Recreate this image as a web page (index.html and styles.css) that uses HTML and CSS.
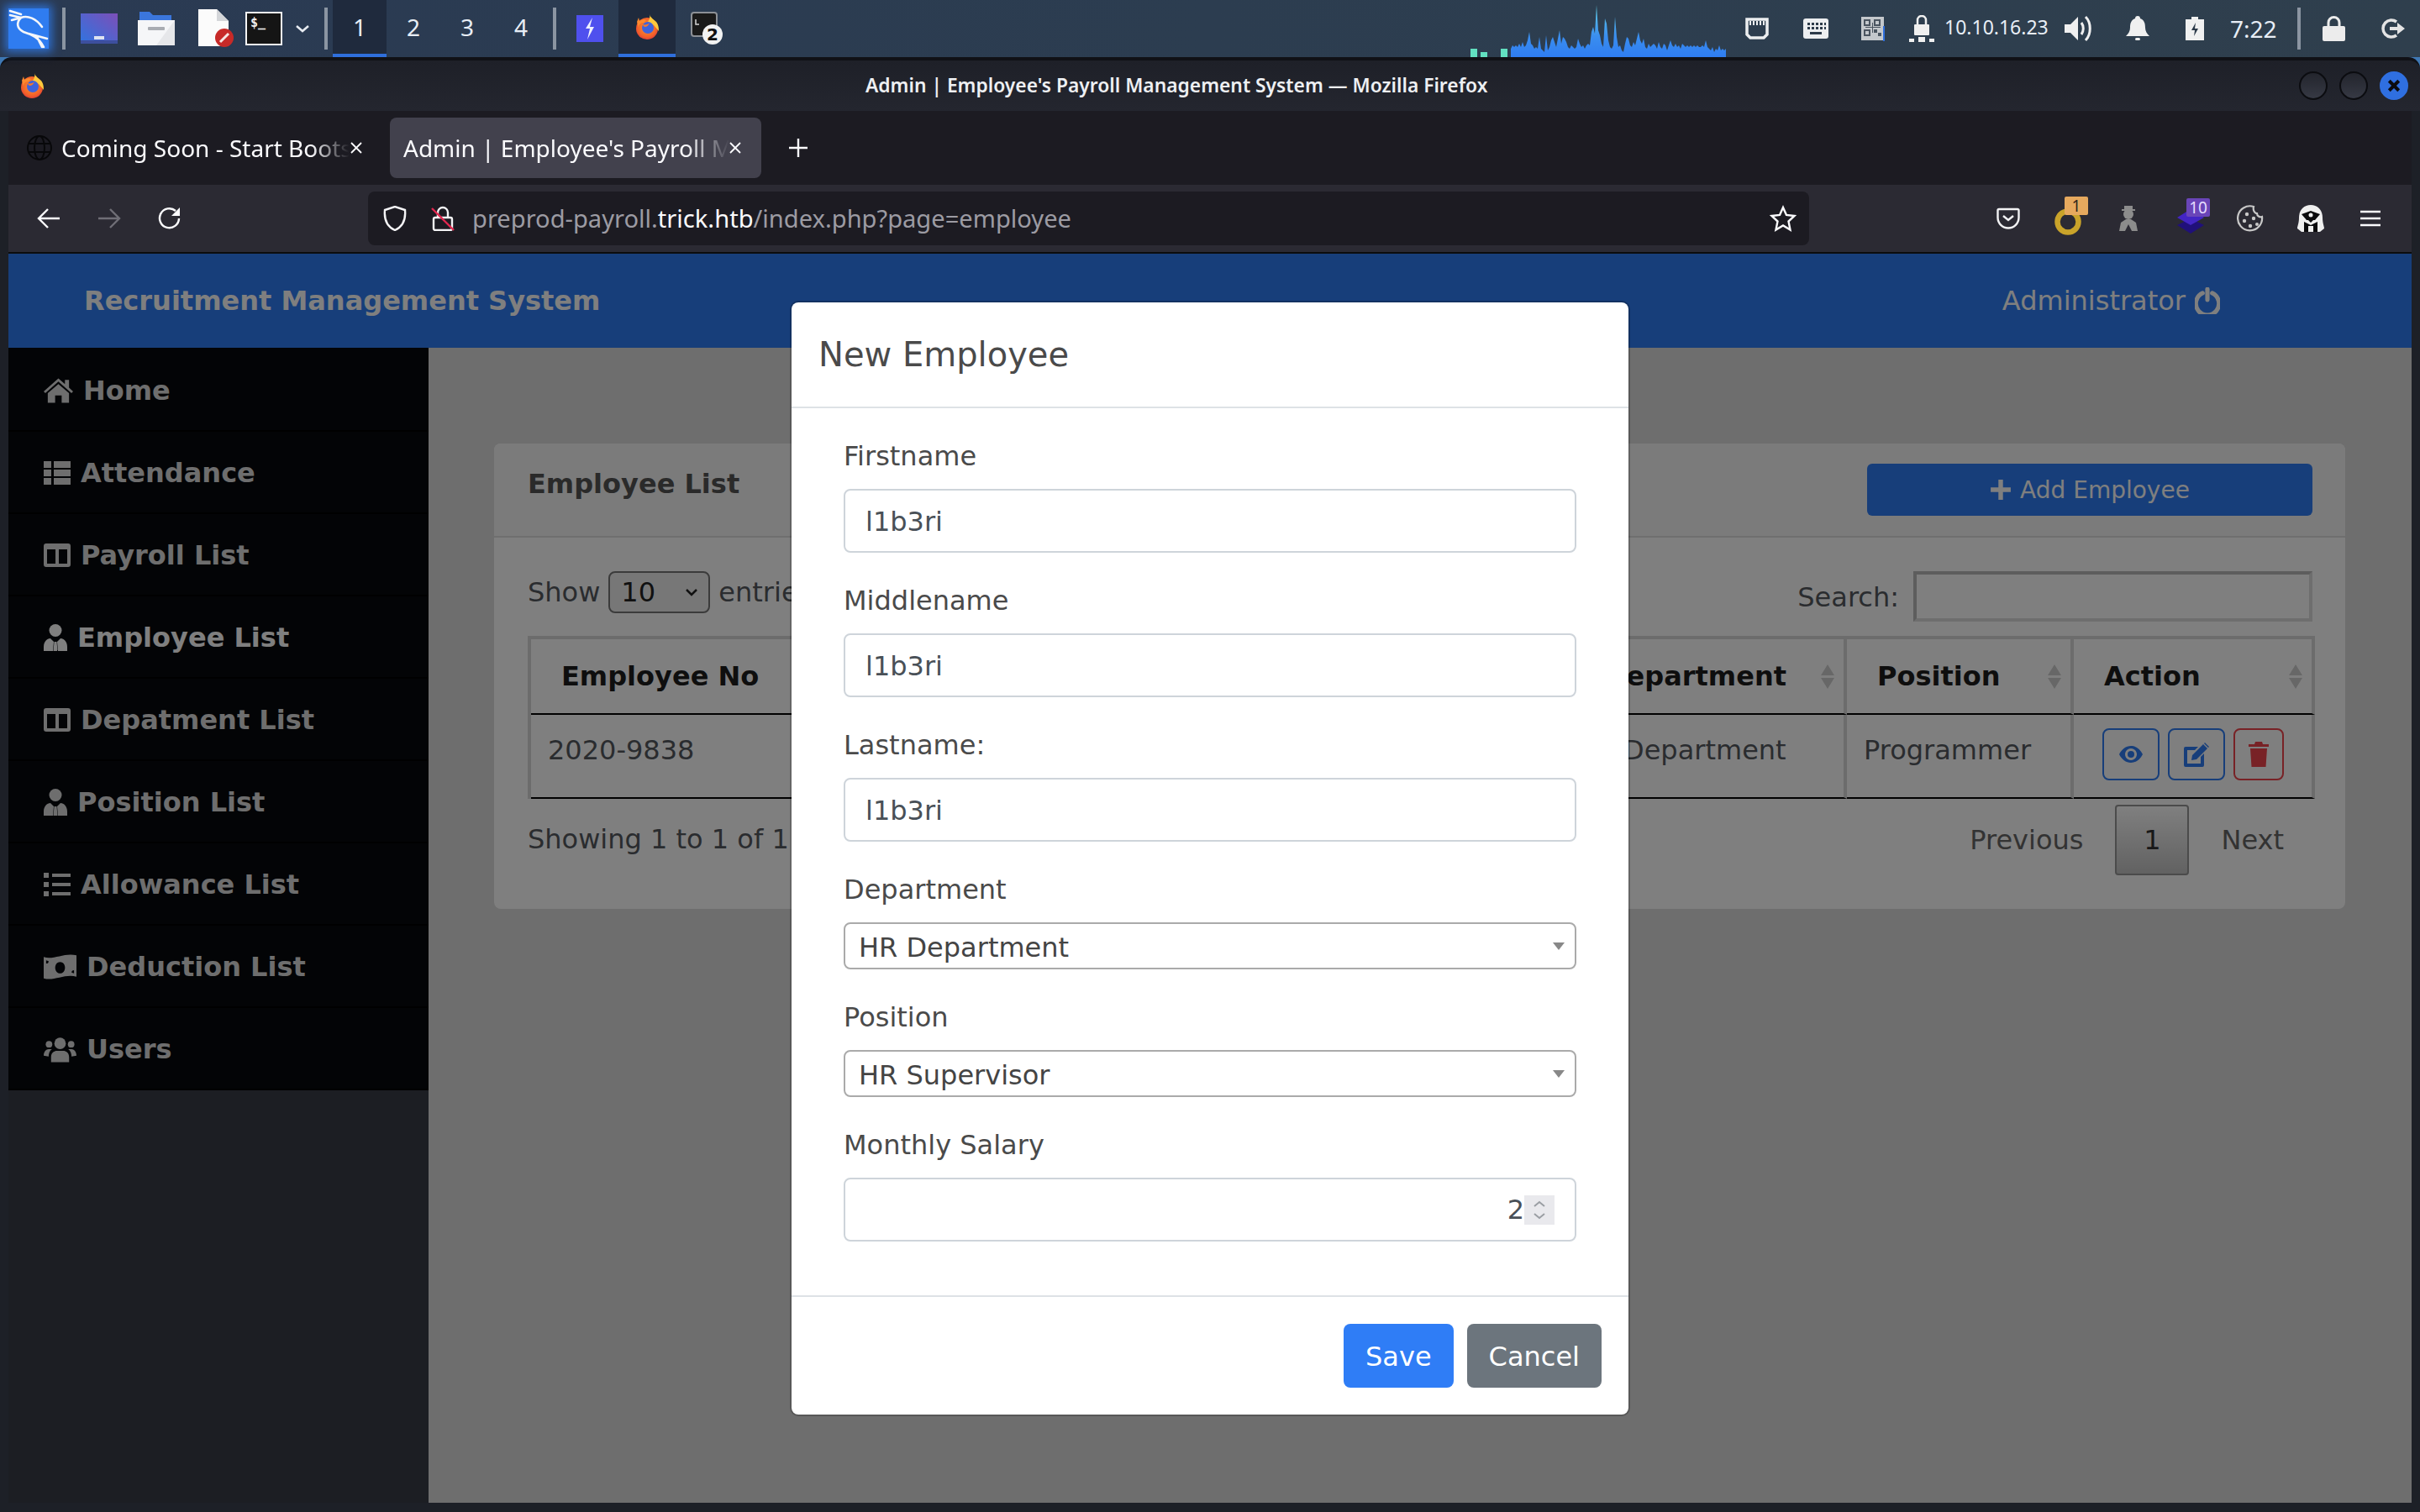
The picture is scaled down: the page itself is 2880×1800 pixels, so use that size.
FILE: index.html
```html
<!DOCTYPE html>
<html lang="en">
<head>
<meta charset="utf-8">
<title>Admin | Employee's Payroll Management System</title>
<link rel="stylesheet" href="styles.css">
</head>
<body>
<svg class="defs" width="0" height="0" aria-hidden="true">
  <defs>
    <linearGradient id="gAppGrid" x1="0" y1="1" x2="1" y2="0"><stop offset="0" stop-color="#2f74e0"/><stop offset="1" stop-color="#7c4fb8"/></linearGradient>
    <linearGradient id="gGraph" x1="0" y1="0" x2="0" y2="1"><stop offset="0" stop-color="#62d0e6"/><stop offset=".6" stop-color="#3a8ef0"/><stop offset="1" stop-color="#2f7df0"/></linearGradient>
    <radialGradient id="gFox" cx=".5" cy=".45" r=".62"><stop offset="0" stop-color="#ff9a2e"/><stop offset=".7" stop-color="#f2602a"/><stop offset="1" stop-color="#d8303c"/></radialGradient>
    <symbol id="fox" viewBox="0 0 28 30">
      <circle cx="14" cy="17" r="13" fill="url(#gFox)"/>
      <path d="M17 0c1 4 5 6 8 9 3 4 3 8 3 11l-6-7-7-4c2-3 3-6 2-9z" fill="#ffc93c"/>
      <path d="M2 9l2-5 1 4c3-2 6-2 8-1l-3 3c-3 0-6 2-6 6z" fill="#ff8a2e"/>
      <circle cx="15" cy="16" r="7" fill="#3f63dc"/>
      <path d="M8 12c4 1 8 0 9-2-1 3-3 5-6 5z" fill="#f7782b"/>
    </symbol>
    <symbol id="fa-user" viewBox="0 0 28 32">
      <circle cx="14" cy="7.500" r="7.500"/>
      <path d="M0 32v-5c0-6 4-10 8-10l3 3 1 1-1 11zM28 32v-5c0-6-4-10-8-10l-3 3-1 1 1 11zM12.500 21h3l1 11h-5z"/>
    </symbol>
    <symbol id="fa-columns" viewBox="0 0 32 32">
      <path fill-rule="evenodd" d="M3 2h26a3 3 0 0 1 3 3v22a3 3 0 0 1-3 3H3a3 3 0 0 1-3-3V5a3 3 0 0 1 3-3zM4 9v17h10V9zM18 9v17h10V9z"/>
    </symbol>
  </defs>
</svg>

<header class="taskbar">
  <svg class="kali" width="48" height="48" viewBox="0 0 48 48"><rect width="48" height="48" fill="#2f7cf0"/><path d="M2 3l13 4M2 8l13 3M4 14l11-3c8-3 18 1 25 11M15 11c-6 6-5 13 3 17 9 3 18 6 24 18M24 30l22 6M34 34l6 12" fill="none" stroke="#f4f6fa" stroke-width="2.600" stroke-linecap="round"/></svg>
  <span class="tb-sep"></span>
  <svg class="t-apps" width="44" height="36" viewBox="0 0 44 36"><rect width="44" height="36" fill="url(#gAppGrid)"/><rect y="32" width="44" height="4" fill="#3d4f9e"/><rect x="16" y="27" width="12" height="4" fill="#dfe3f0"/></svg>
  <svg class="t-files" width="44" height="40" viewBox="0 0 44 40"><path d="M2 0h12l4 4h22v8H2z" fill="#3b76dc"/><rect y="10" width="44" height="30" fill="#f5f6f8"/><path d="M44 10v30H22z" fill="#e6e7ea"/><rect x="12" y="18" width="20" height="4" rx="1" fill="#a9acb2"/></svg>
  <svg class="t-doc" width="42" height="46" viewBox="0 0 42 46"><path d="M0 0h22l14 14v30H0z" fill="#fbfbfb"/><path d="M22 0l14 14H22z" fill="#d4d6d9"/><circle cx="31" cy="34" r="11" fill="#c72a28"/><path d="M26 39l10-10" stroke="#f7e6e3" stroke-width="3"/></svg>
  <svg class="t-term" width="44" height="40" viewBox="0 0 44 40"><rect x="1" y="1" width="42" height="38" fill="#151515" stroke="#f5f5f5" stroke-width="2"/><text class="term-glyph" x="6" y="18">$_</text></svg>
  <svg class="t-chev" width="16" height="10" viewBox="0 0 16 10"><path d="M1 2l7 6 7-6" fill="none" stroke="#e8ecf2" stroke-width="2.500"/></svg>
  <span class="tb-sep tb-sep-b"></span>
  <span class="ws ws-first ws-active">1</span>
  <span class="ws">2</span>
  <span class="ws">3</span>
  <span class="ws">4</span>
  <span class="tb-sep tb-sep-c"></span>
  <svg class="t-bolt" width="32" height="32" viewBox="0 0 32 32"><rect width="32" height="32" fill="#4f50ee"/><path d="M19 3l-8 13h5l-3 13 8-15h-5z" fill="#eef0ff"/></svg>
  <span class="ws-app"><svg width="28" height="30"><use href="#fox"/></svg></span>
  <svg class="t-term2" width="40" height="40" viewBox="0 0 40 40"><rect x="1" y="1" width="30" height="28" rx="3" fill="#1a1a1a" stroke="#8c9096" stroke-width="2"/><path d="M6 9v6h4" stroke="#d8d8d8" stroke-width="1.500" fill="none"/><circle cx="26" cy="27" r="12" fill="#f2f2f2"/><text class="badge-glyph" x="26" y="34">2</text></svg>
  <div class="tray">
    <svg class="netgraph" width="304" height="64" viewBox="0 0 304 64">
      <path d="M0 64v-10h8v10zM12 64v-6h8v6zM36 64v-10h8v10z" fill="#62e0c0"/>
      <polygon fill="url(#gGraph)" points="48,64 48,54 50,50 52,52 54,50 56,52 58,48 60,52 62,46 64,52 66,50 68,44 70,34 72,48 74,50 76,54 78,52 80,54 82,40 84,54 86,56 88,58 90,38 92,56 94,52 96,44 98,40 100,46 102,52 104,42 106,32 108,48 110,40 112,42 114,46 116,52 118,54 120,50 122,52 124,54 126,52 128,42 130,48 132,52 134,50 136,54 138,50 140,48 142,50 144,34 146,28 148,36 150,2 152,32 154,38 156,48 158,52 160,18 162,24 164,44 166,52 168,54 170,50 172,16 174,40 176,52 178,50 180,56 182,58 184,48 186,40 188,42 190,50 192,52 194,46 196,50 198,42 200,34 202,44 204,48 206,42 208,52 210,54 212,48 214,52 216,50 218,48 220,50 222,54 224,46 226,52 228,54 230,48 232,50 234,56 236,50 238,44 240,50 242,52 244,48 246,52 248,50 250,54 252,48 254,50 256,52 258,50 260,52 262,50 264,52 266,50 268,52 270,50 272,52 274,52 276,50 278,52 280,44 282,52 284,54 286,56 288,52 290,58 292,54 294,56 296,50 298,56 300,54 302,56 304,54 304,64"/>
    </svg>
    <svg class="t-eth" width="28" height="26" viewBox="0 0 28 26"><path d="M2 2h24v18l-4 4H6l-4-4z" fill="none" stroke="#eceef0" stroke-width="3.500"/><path d="M6 4v5M10 4v5M14 4v5M18 4v5M22 4v5" stroke="#eceef0" stroke-width="2"/></svg>
    <svg class="t-kb" width="30" height="24" viewBox="0 0 30 24"><rect width="30" height="24" rx="3" fill="#eceef0"/><path d="M5 5h3v3H5zM10 5h3v3h-3zM15 5h3v3h-3zM20 5h3v3h-3zM25 5h2v3h-2zM5 10h3v3H5zM10 10h3v3h-3zM15 10h3v3h-3zM20 10h3v3h-3zM25 10h2v3h-2zM8 16h14v3H8z" fill="#2c3a49"/></svg>
    <svg class="t-qr" width="30" height="30" viewBox="0 0 30 30"><rect y="1" width="27" height="28" fill="#c4c8cc"/><path d="M3 4h8v2H3zM3 6h2v4H3zM9 6h2v4H9zM3 10h8v2H3zM15 4h8v8h-8zM3 16h8v8H3zM15 16h4v4h-4zM20 20h4v4h-4zM13 8h1v12h-1zM5 13h18v1H5z" fill="#4b5560"/><path d="M17 6h4v4h-4zM5 18h4v4H5z" fill="#c4c8cc"/><rect x="26" y="12" width="2" height="18" fill="#2f6fdc"/></svg>
    <svg class="t-locknet" width="30" height="32" viewBox="0 0 30 32"><path d="M10 12V6a5 5 0 0 1 10 0v6" fill="none" stroke="#f0f0f0" stroke-width="2.500"/><rect x="6" y="11" width="18" height="13" rx="1" fill="#f0f0f0"/><path d="M0 28h6v4H0zM11 26h8v6h-8zM24 28h6v4h-6z" fill="#f0f0f0"/></svg>
    <span class="ip">10.10.16.23</span>
    <svg class="t-vol" width="35" height="32" viewBox="0 0 35 32"><path d="M0 11h7l9-9v28l-9-9H0z" fill="#f0f0f0"/><path d="M20 9c3 4 3 10 0 14M25 2c7 7 7 21 0 28" fill="none" stroke="#f0f0f0" stroke-width="3"/></svg>
    <svg class="t-bell" width="28" height="30" viewBox="0 0 28 30"><path d="M14 0c2 0 3 1 3 3 5 2 6 6 6 11 0 4 2 7 5 10H0c3-3 5-6 5-10 0-5 1-9 6-11 0-2 1-3 3-3z" fill="#f0f0f0"/><rect x="11" y="26" width="6" height="3" rx="1.500" fill="#f0f0f0"/></svg>
    <svg class="t-batt" width="22" height="28" viewBox="0 0 22 28"><path d="M7 0h8v3h7v25H0V3h7z" fill="#f0f0f0"/><path d="M12 7l-5 9h4l-1 7 5-9h-4z" fill="#2c3a49"/></svg>
    <span class="clock">7:22</span>
    <span class="tb-sep tb-sep-d"></span>
    <svg class="t-lock" width="27" height="30" viewBox="0 0 27 30"><path d="M7 13V8a6.500 6.500 0 0 1 13 0v5" fill="none" stroke="#ececec" stroke-width="3"/><rect y="12" width="27" height="18" rx="2" fill="#ececec"/></svg>
    <svg class="t-out" width="29" height="26" viewBox="0 0 29 26"><path d="M18 5a10 10 0 1 0 0 16" fill="none" stroke="#e4e4e4" stroke-width="3.500"/><path d="M10 11h9V6l9 7-9 7v-5h-9z" fill="#e4e4e4"/></svg>
  </div>
</header>

<div class="window">
  <div class="titlebar">
    <svg class="title-fox" width="28" height="30"><use href="#fox"/></svg>
    <span class="title-text">Admin | Employee's Payroll Management System — Mozilla Firefox</span>
    <div class="winbtns">
      <span class="winbtn"></span>
      <span class="winbtn"></span>
      <span class="winbtn winbtn-close"><svg width="16" height="16" viewBox="0 0 14 14"><path d="M2 2l10 10M12 2L2 12" stroke="#0b0c10" stroke-width="3.500"/></svg></span>
    </div>
  </div>

  <div class="tabbar">
    <div class="tab">
      <svg class="globe" width="30" height="30" viewBox="0 0 30 30"><g fill="none" stroke="#08080a" stroke-width="2"><circle cx="15" cy="15" r="14"/><ellipse cx="15" cy="15" rx="6" ry="14"/><path d="M1 10h28M1 20h28"/></g></svg>
      <span class="tab-label tab-label-a">Coming Soon - Start Boots</span>
      <svg class="tab-x" width="16" height="16" viewBox="0 0 16 16"><path d="M2 2l12 12M14 2L2 14" stroke="#fbfbfe" stroke-width="1.800"/></svg>
    </div>
    <div class="tab tab-active">
      <span class="tab-label tab-label-b">Admin | Employee's Payroll M</span>
      <svg class="tab-x" width="16" height="16" viewBox="0 0 16 16"><path d="M2 2l12 12M14 2L2 14" stroke="#fbfbfe" stroke-width="1.800"/></svg>
    </div>
    <svg class="tab-plus" width="24" height="24" viewBox="0 0 24 24"><path d="M12 1v22M1 12h22" stroke="#fbfbfe" stroke-width="2.400"/></svg>
  </div>

  <div class="toolbar">
    <svg class="nav-back" width="28" height="26" viewBox="0 0 28 26"><path d="M27 13H3M13 2L2 13l11 11" fill="none" stroke="#fbfbfe" stroke-width="2.400"/></svg>
    <svg class="nav-fwd" width="30" height="26" viewBox="0 0 28 26"><path d="M1 13h24M15 2l11 11-11 11" fill="none" stroke="#6f6e76" stroke-width="2.400"/></svg>
    <svg class="nav-reload" width="28" height="28" viewBox="0 0 28 28"><path d="M25 14a11.500 11.500 0 1 1-4-9" fill="none" stroke="#fbfbfe" stroke-width="2.400"/><path d="M26 1v10H16z" fill="#fbfbfe"/></svg>
    <div class="urlbar">
      <svg width="28" height="30" viewBox="0 0 28 30"><path d="M14 1l12 4c1 11-3 20-12 24C5 25 1 16 2 5z" fill="none" stroke="#f4f4f6" stroke-width="2.400"/></svg>
      <svg class="url-lock" width="28" height="30" viewBox="0 0 28 30"><path d="M8 14V8a6 6 0 0 1 12 0v6" fill="none" stroke="#f4f4f6" stroke-width="2.400"/><rect x="3" y="14" width="22" height="15" rx="2" fill="none" stroke="#f4f4f6" stroke-width="2.400"/><path d="M1 3l26 26" stroke="#e22850" stroke-width="2.400"/></svg>
      <span class="url"><span class="url-dim">preprod-payroll.</span>trick.htb<span class="url-dim">/index.php?page=employee</span></span>
      <svg class="url-star" width="32" height="32" viewBox="0 0 32 32"><path d="M16 3l4 9 9.500 1-7 6.500 2 10L16 24.500 7.500 29.500l2-10-7-6.500 9.500-1z" fill="none" stroke="#fbfbfe" stroke-width="2.400"/></svg>
    </div>
    <svg class="x-pocket" width="28" height="26" viewBox="0 0 28 26"><path d="M3 2h22a1.500 1.500 0 0 1 1.500 1.500V12A12.500 12.500 0 0 1 1.500 12V3.500A1.500 1.500 0 0 1 3 2z" fill="none" stroke="#f2f2f4" stroke-width="2.400"/><path d="M8 10l6 5 6-5" fill="none" stroke="#f2f2f4" stroke-width="2.400"/></svg>
    <span class="ext ext-ring"><svg width="34" height="34" viewBox="0 0 34 34"><circle cx="16" cy="18" r="12.500" fill="none" stroke="#c9a32a" stroke-width="6.500"/></svg><span class="ext-badge ext-badge-a">1</span></span>
    <svg class="x-spy" width="26" height="30" viewBox="0 0 26 30"><path d="M8 0h10v4h3v2H5V4h3z" fill="#8c8c8c"/><circle cx="13" cy="10" r="6" fill="#8c8c8c"/><path d="M2 30l2-10 6-4h6l6 4 2 10h-7l-4-8-4 8z" fill="#8c8c8c"/></svg>
    <span class="ext ext-layers"><svg width="34" height="30" viewBox="0 0 34 30"><path d="M17 12l16 8-16 10L1 20z" fill="#20107a"/><path d="M17 1l16 10-16 9L1 11z" fill="#4325c4"/></svg><span class="ext-badge ext-badge-b">10</span></span>
    <svg class="x-cookie" width="32" height="32" viewBox="0 0 32 32"><path d="M20 2A14.500 14.500 0 1 0 30 14c-3 1-6-1-6-4-3 0-5-4-4-8z" fill="none" stroke="#c8c8c8" stroke-width="2.200"/><g fill="#c8c8c8"><circle cx="12" cy="11" r="2.200"/><circle cx="20" cy="16" r="2.200"/><circle cx="9" cy="19" r="2.200"/><circle cx="16" cy="25" r="2.200"/><circle cx="24" cy="23" r="2"/></g></svg>
    <svg class="x-ninja" width="32" height="32" viewBox="0 0 32 32"><path d="M16 0c9 0 14 7 14 15 0 7 2 10 2 13l-5 4H5l-5-4c0-3 2-6 2-13C2 7 7 0 16 0z" fill="#f0f0f0"/><path d="M5 11l11-4 11 4-6 7h-2l-3 3-3-3H11z" fill="#0b0b0d"/><path d="M8 32V20l8 4 8-4v12h-5v-7h-6v7z" fill="#0b0b0d"/><circle cx="16" cy="12" r="2.500" fill="#f0f0f0"/></svg>
    <svg class="x-menu" width="24" height="20" viewBox="0 0 24 20"><path d="M0 2h24M0 10h24M0 18h24" stroke="#fbfbfe" stroke-width="2.600"/></svg>
  </div>

  <div class="page">
    <nav class="navbar">
      <span class="brand">Recruitment Management System</span>
      <span class="admin">Administrator <svg class="power" width="30" height="32" viewBox="0 0 26 28"><path d="M8 6a12 12 0 1 0 10 0" fill="none" stroke="#fff" stroke-width="4.500" stroke-linecap="round"/><path d="M13 2v11" stroke="#fff" stroke-width="4.500" stroke-linecap="round"/></svg></span>
    </nav>

    <div class="layout">
      <aside class="sidebar">
        <a class="side-item"><svg class="side-ic" width="35" height="30" viewBox="0 0 36 30"><path d="M18 0l8 7V2h5v9.500l5 4.500-2 2L18 4 2 18l-2-2z"/><path d="M18 7l13 11v12h-9v-9h-8v9H5V18z"/></svg>Home</a>
        <a class="side-item"><svg class="side-ic" width="32" height="28" viewBox="0 0 32 28"><path d="M0 0h9v8H0zM12 0h20v8H12zM0 10h9v8H0zM12 10h20v8H12zM0 20h9v8H0zM12 20h20v8H12z"/></svg>Attendance</a>
        <a class="side-item"><svg class="side-ic" width="32" height="32"><use href="#fa-columns"/></svg>Payroll List</a>
        <a class="side-item side-active"><svg class="side-ic" width="28" height="32"><use href="#fa-user"/></svg>Employee List</a>
        <a class="side-item"><svg class="side-ic" width="32" height="32"><use href="#fa-columns"/></svg>Depatment List</a>
        <a class="side-item"><svg class="side-ic" width="28" height="32"><use href="#fa-user"/></svg>Position List</a>
        <a class="side-item"><svg class="side-ic" width="32" height="28" viewBox="0 0 32 28"><path d="M0 0h6v6H0zM0 11h6v6H0zM0 22h6v6H0zM10 1h22v4H10zM10 12h22v4H10zM10 23h22v4H10z"/></svg>Allowance List</a>
        <a class="side-item"><svg class="side-ic" width="39" height="32" viewBox="0 0 40 32"><path fill-rule="evenodd" d="M0 4c12 4 26-6 40-2v26c-14-4-28 6-40 2zM20 10a6 7 0 1 0 .01 0zM3 8v4c2 0 3-1 3-3zM37 24v-4c-2 0-3 1-3 3z"/></svg>Deduction List</a>
        <a class="side-item"><svg class="side-ic" width="39" height="32" viewBox="0 0 40 32"><circle cx="20" cy="9" r="7"/><circle cx="6.500" cy="10" r="4"/><circle cx="33.500" cy="10" r="4"/><path d="M9 32v-6c0-6 4-8 7-8h8c3 0 7 2 7 8v6zM0 24c0-5 3-8 6-8h4c-3 2-4 6-4 9zM40 24c0-5-3-8-6-8h-4c3 2 4 6 4 9z"/></svg>Users</a>
      </aside>

      <main class="main">
        <section class="card">
          <div class="card-head">
            <b class="card-title">Employee List</b>
            <button class="btn-add"><svg class="plus" width="26" height="26" viewBox="0 0 24 24"><path d="M12 1v22M1 12h22" stroke="#fff" stroke-width="5"/></svg> Add Employee</button>
          </div>
          <div class="card-body">
            <div class="dt-top">
              <div class="dt-len">Show <span class="len-select">10<svg width="16" height="10" viewBox="0 0 16 10"><path d="M2 2l6 6 6-6" fill="none" stroke="#222" stroke-width="2.500"/></svg></span> entries</div>
              <label class="dt-search">Search: <input class="search-input" type="text"></label>
            </div>
            <table class="dt">
              <colgroup>
                <col class="c-a"><col class="c-b"><col class="c-c"><col class="c-d"><col class="c-e">
              </colgroup>
              <thead>
                <tr><th>Employee No</th><th></th><th>Department</th><th>Position</th><th>Action</th></tr>
              </thead>
              <tbody>
                <tr>
                  <td>2020-9838</td>
                  <td></td>
                  <td class="td-dept">Department</td>
                  <td>Programmer</td>
                  <td class="td-actions">
                    <span class="act act-blue"><svg width="28" height="20" viewBox="0 0 28 20"><path fill-rule="evenodd" d="M14 0c6 0 11 4 14 10-3 6-8 10-14 10S3 16 0 10C3 4 8 0 14 0zm0 3a7 7 0 1 0 .01 0z" fill="#2e7df4"/><circle cx="14" cy="10" r="4" fill="#2e7df4"/></svg></span>
                    <span class="act act-blue"><svg width="32" height="30" viewBox="0 0 32 30"><path d="M3 6h15l-4 4H5v16h16v-8l4-4v14a2 2 0 0 1-2 2H3a2 2 0 0 1-2-2V8a2 2 0 0 1 2-2z" fill="#2e7df4"/><path d="M11 16L24 3l5 5-13 13-6 1zM26 1l5 5-1 1-5-5z" fill="#2e7df4"/></svg></span>
                    <span class="act act-red"><svg width="24" height="30" viewBox="0 0 24 30"><path d="M8 0h8l1 3h7v3H0V3h7zM2 8h20l-1.500 22h-17z" fill="#f0444c"/></svg></span>
                  </td>
                </tr>
              </tbody>
            </table>
            <div class="dt-bottom">
              <span class="dt-info">Showing 1 to 1 of 1 entries</span>
              <div class="pager">
                <span class="pg">Previous</span>
                <span class="pg pg-current">1</span>
                <span class="pg">Next</span>
              </div>
            </div>
          </div>
        </section>
      </main>
    </div>

    <div class="backdrop"></div>

    <div class="modal">
      <div class="modal-head"><h5 class="modal-title">New Employee</h5></div>
      <div class="modal-body">
        <div class="field"><label class="lbl">Firstname</label><input class="ctl" type="text" value="l1b3ri"></div>
        <div class="field"><label class="lbl">Middlename</label><input class="ctl" type="text" value="l1b3ri"></div>
        <div class="field"><label class="lbl">Lastname:</label><input class="ctl" type="text" value="l1b3ri"></div>
        <div class="field"><label class="lbl">Department</label><div class="sel">HR Department<span class="sel-arrow"></span></div></div>
        <div class="field"><label class="lbl">Position</label><div class="sel">HR Supervisor<span class="sel-arrow"></span></div></div>
        <div class="field"><label class="lbl">Monthly Salary</label>
          <div class="ctl ctl-num">2<span class="spin"><svg width="36" height="35" viewBox="0 0 36 35"><path d="M12 13l6-5 6 5M12 22l6 5 6-5" fill="none" stroke="#9a9ea3" stroke-width="2"/></svg></span></div>
        </div>
      </div>
      <div class="modal-foot">
        <button class="btn btn-save">Save</button>
        <button class="btn btn-cancel">Cancel</button>
      </div>
    </div>
  </div>
</div>
</body>
</html>
```

FILE: styles.css
```css
* { box-sizing: border-box; }
html, body { margin: 0; padding: 0; }
body {
  width: 2880px;
  height: 1800px;
  overflow: hidden;
  background: #3f78b4;
  font-family: "DejaVu Sans", sans-serif;
  font-size: 32px;
  line-height: 48px;
  color: #212529;
}
.defs { position: absolute; }
svg { display: block; flex-shrink: 0; }

/* desktop panel */
.taskbar {
  height: 68px;
  display: flex;
  align-items: center;
  background: linear-gradient(90deg, #2a3a53 0%, #2c3d50 50%, #2f3f4d 100%);
  font-family: "Noto Sans", sans-serif;
  color: #e8eef6;
}
.kali { margin-left: 10px; box-shadow: 0 0 10px 4px rgba(47,124,240,.75); }
.tb-sep { width: 4px; height: 50px; margin-left: 16px; background: #8b95a2; flex-shrink: 0; }
.tb-sep-b { margin-left: 18px; }
.tb-sep-c { margin-left: 6px; }
.tb-sep-d { margin-left: 24px; }
.t-apps { margin-left: 18px; }
.t-files { margin-left: 24px; }
.t-doc { margin-left: 28px; }
.t-term { margin-left: 14px; }
.term-glyph { font: 700 15px "DejaVu Sans Mono", monospace; fill: #f0f0f0; }
.t-chev { margin-left: 16px; }
.ws {
  width: 64px;
  height: 68px;
  line-height: 64px;
  text-align: center;
  font-size: 28px;
  border-bottom: 4px solid transparent;
  flex-shrink: 0;
}
.ws-first { margin-left: 6px; }
.ws-active { background: #1f2a3d; border-bottom-color: #2f6fdc; }
.t-bolt { margin-left: 24px; }
.ws-app {
  width: 68px;
  height: 68px;
  margin-left: 18px;
  display: flex;
  align-items: center;
  justify-content: center;
  background: #1f2a3d;
  border-bottom: 4px solid #2f6fdc;
}
.t-term2 { margin-left: 18px; }
.badge-glyph { font: 700 20px "DejaVu Sans", sans-serif; fill: #111; text-anchor: middle; }
.tray { margin-left: auto; padding-right: 17px; display: flex; align-items: center; height: 68px; }
.netgraph { align-self: flex-end; }
.t-eth { margin-left: 23px; }
.t-kb { margin-left: 41px; }
.t-qr { margin-left: 39px; }
.t-locknet { margin-left: 27px; }
.ip { width: 128px; margin-left: 12px; font-size: 23px; white-space: nowrap; line-height: 30px; margin-top: -4px; }
.t-vol { margin-left: 15px; }
.t-bell { margin-left: 38px; }
.t-batt { margin-left: 43px; }
.clock { width: 56px; margin-left: 31px; font-size: 28px; white-space: nowrap; }
.t-lock { margin-left: 26px; }
.t-out { margin-left: 43px; }

/* window chrome */
.window {
  height: 1732px;
  padding: 0 10px 11px;
  background: #1d2027;
  border-top: 4px solid #101116;
  border-radius: 14px 14px 0 0;
  font-family: "Noto Sans", sans-serif;
}
.titlebar {
  height: 60px;
  margin: 0 -10px;
  padding: 0 14px 0 24px;
  display: flex;
  align-items: center;
  background: linear-gradient(180deg, #1e2028, #24262f);
  border-radius: 14px 14px 0 0;
}
.title-text { margin-left: 978px; font-size: 22.800px; font-weight: 600; color: #eef0f3; white-space: nowrap; }
.winbtns { margin-left: auto; display: flex; gap: 14px; }
.winbtn {
  width: 34px;
  height: 34px;
  border-radius: 50%;
  background: linear-gradient(180deg, #23252d, #363944);
  border: 2px solid #0b0c10;
  display: flex;
  align-items: center;
  justify-content: center;
}
.winbtn-close { background: #2f6fe0; border-color: #2f6fe0; }
.tabbar {
  height: 88px;
  display: flex;
  align-items: center;
  background: #1c1b22;
  color: #fbfbfe;
  font-size: 28px;
}
.tab {
  width: 444px;
  height: 72px;
  padding: 0 22px;
  display: flex;
  align-items: center;
  border-radius: 8px;
}
.tab-active { width: 442px; margin-left: 10px; padding: 0 23px 0 16px; background: #42414d; }
.globe { margin-right: 11px; }
.tab-label {
  white-space: nowrap;
  -webkit-mask-image: linear-gradient(90deg, #000 86%, transparent 99%);
  mask-image: linear-gradient(90deg, #000 86%, transparent 99%);
}
.tab-label-a { flex-shrink: 0; margin-right: -20px; }
.tab-label-b { flex-shrink: 0; margin-right: -20px; }
.tab-x { margin-left: auto; }
.tab-plus { margin-left: 32px; }
.toolbar {
  height: 82px;
  display: flex;
  align-items: center;
  background: #2b2a33;
  border-bottom: 2px solid #0c0c0d;
}
.nav-back { margin-left: 34px; }
.nav-fwd { margin-left: 43px; }
.nav-reload { margin-left: 43px; }
.urlbar {
  width: 1715px;
  height: 64px;
  margin-left: 222px;
  padding: 0 15px 0 18px;
  display: flex;
  align-items: center;
  background: #1c1b22;
  border-radius: 8px;
}
.url-lock { margin-left: 29px; }
.url { margin-left: 21px; font-size: 29.100px; color: #fbfbfe; white-space: nowrap; }
.url-dim { color: #9c9ba3; }
.url-star { margin-left: auto; }
.x-pocket { margin-left: 223px; }
.ext { position: relative; display: block; flex-shrink: 0; }
.ext-ring { margin-left: 41px; margin-top: 6px; }
.ext-layers { margin-left: 44px; margin-top: 6px; }
.ext-badge {
  position: absolute;
  top: -12px;
  height: 22px;
  font-size: 19px;
  line-height: 22px;
  text-align: center;
  border-radius: 2px;
}
.ext-badge-a { left: 12px; width: 28px; background: #e6a95e; color: #30261a; }
.ext-badge-b { left: 12px; width: 28px; background: #6a45b8; color: #e6dcff; }
.x-spy { margin-left: 41px; }
.x-cookie { margin-left: 38px; }
.x-ninja { margin-left: 40px; }
.x-menu { margin-left: 43px; }

/* page */
.page {
  position: relative;
  height: 1487px;
  display: flex;
  flex-direction: column;
  background: #dcdcdc;
  font-family: "DejaVu Sans", sans-serif;
  overflow: hidden;
}
.navbar {
  height: 112px;
  flex-shrink: 0;
  padding: 0 228px 0 90px;
  display: flex;
  align-items: center;
  justify-content: space-between;
  background: #2e7df4;
  color: #fff;
}
.brand { font-size: 32px; font-weight: 700; }
.admin { display: flex; align-items: center; gap: 11px; }
.layout { flex: 1; display: flex; min-height: 0; }
.sidebar { width: 500px; flex-shrink: 0; background: #383c46; }
.side-item {
  height: 98px;
  padding: 2px 0 0 42px;
  display: flex;
  align-items: center;
  gap: 12px;
  background: #07090d;
  border-bottom: 2px solid #000;
  color: #dcdcdc;
  font-weight: 700;
}
.side-item:first-child { height: 100px; padding-top: 4px; }
.side-active { color: #fff; }
.side-ic { fill: currentColor; }
.main { flex: 1; padding: 114px 79px 0 78px; min-width: 0; }
.card { background: #fff; border-radius: 8px; }
.card-head {
  height: 112px;
  padding: 24px 39px 24px 40px;
  display: flex;
  align-items: flex-start;
  justify-content: space-between;
  background: #f7f7f7;
  border-bottom: 2px solid #dfdfdf;
  border-radius: 8px 8px 0 0;
}
.card-title { color: #555; line-height: 48px; }
.btn-add {
  width: 530px;
  height: 62px;
  display: flex;
  align-items: center;
  justify-content: center;
  gap: 10px;
  background: #2e7df4;
  color: #fff;
  border: 0;
  border-radius: 6px;
  font: 28px "DejaVu Sans", sans-serif;
}
.card-body { padding: 40px 39px 40px 40px; color: #55595e; }
.dt-top { height: 77px; display: flex; justify-content: space-between; align-items: flex-start; }
.dt-len { display: flex; align-items: center; height: 50px; gap: 10px; white-space: nowrap; }
.len-select {
  width: 121px;
  height: 50px;
  padding: 0 12px 0 13px;
  display: flex;
  align-items: center;
  justify-content: space-between;
  background: #efefef;
  border: 2px solid #767676;
  border-radius: 8px;
  color: #222;
}
.dt-search { display: flex; align-items: flex-start; gap: 17px; height: 60px; line-height: 62px; }
.search-input {
  width: 475px;
  height: 60px;
  margin: 0;
  background: #fff;
  border-style: solid;
  border-width: 4px;
  border-color: #bababa #dcdcdc #dcdcdc #bababa;
}
.dt {
  width: 2127px;
  table-layout: fixed;
  border-collapse: separate;
  border-spacing: 0;
  border-top: 4px solid #d9d9d9;
  border-left: 4px solid #d9d9d9;
}
.c-a { width: 568px; }
.c-b { width: 673px; }
.c-c { width: 325px; }
.c-d { width: 270px; }
.c-e { width: 287px; }
.dt th {
  position: relative;
  height: 90px;
  padding: 1px 0 1px 36px;
  text-align: left;
  color: #1d1d1d;
  white-space: nowrap;
  border-right: 4px solid #d9d9d9;
  border-bottom: 2px solid #000;
}
.dt th::before, .dt th::after {
  content: "";
  position: absolute;
  right: 11px;
  border-left: 8px solid transparent;
  border-right: 8px solid transparent;
}
.dt th::before { top: 30px; border-bottom: 13px solid #cfcfcf; }
.dt th::after { top: 46px; border-top: 13px solid #cfcfcf; }
.dt th:nth-child(2)::before, .dt th:nth-child(2)::after { display: none; }
.dt td {
  height: 100px;
  padding: 0 0 14px 20px;
  vertical-align: middle;
  white-space: nowrap;
  border-right: 4px solid #d9d9d9;
  border-bottom: 2px solid #000;
}
.dt .td-dept { padding-left: 59px; }
.dt .td-actions { padding: 0 0 4px 34px; }
.td-actions { font-size: 0; }
.act {
  display: inline-flex;
  align-items: center;
  justify-content: center;
  width: 68px;
  height: 62px;
  margin-right: 10px;
  border: 2px solid #2e7df4;
  border-radius: 8px;
  vertical-align: middle;
}
.act-red { width: 60px; margin-right: 0; border-color: #f0444c; }
.dt-bottom {
  height: 91px;
  padding-top: 7px;
  display: flex;
  justify-content: space-between;
  align-items: flex-start;
}
.dt-info { margin-top: 17px; white-space: nowrap; }
.pager { display: flex; align-items: center; height: 84px; padding-right: 34px; color: #666; }
.pg { padding: 0 38px 0 0; line-height: 84px; }
.pg:last-child { padding: 0 0 0 38px; }
.pg-current {
  width: 88px;
  padding: 0;
  height: 84px;
  text-align: center;
  background: linear-gradient(180deg, #fff, #c4c4c4);
  border: 2px solid #979797;
  border-radius: 4px;
  line-height: 80px;
  color: #333;
}
.backdrop { position: absolute; inset: 0; background: rgba(0,0,0,.5); }

/* modal */
.modal {
  position: absolute;
  left: 930px;
  top: 56px;
  width: 1000px;
  height: 1328px;
  background: #fff;
  background-clip: padding-box;
  border: 2px solid rgba(0,0,0,.2);
  border-radius: 10px;
  color: #4a4a4a;
}
.modal-head { padding: 32px; border-bottom: 2px solid #dee2e6; }
.modal-title { margin: 0; font-size: 40px; font-weight: 400; line-height: 60px; }
.modal-body { padding: 32px 62px; }
.field { margin-bottom: 32px; }
.lbl { display: block; margin-bottom: 16px; line-height: 50px; height: 48px; }
.ctl {
  display: block;
  width: 100%;
  height: 76px;
  padding: 2px 24px 0;
  margin: 0;
  background: #fff;
  border: 2px solid #ced4da;
  border-radius: 8px;
  color: #495057;
  font: 32px/48px "DejaVu Sans", sans-serif;
}
.ctl-num {
  display: flex;
  align-items: center;
  justify-content: flex-end;
  padding: 0 24px;
}
.spin { width: 36px; height: 35px; background: #e9e9ed; }
.sel {
  position: relative;
  height: 56px;
  padding-left: 16px;
  background: #fff;
  border: 2px solid #aaa;
  border-radius: 8px;
  line-height: 56px;
  color: #444;
}
.sel-arrow {
  position: absolute;
  right: 12px;
  top: 22px;
  border-left: 7px solid transparent;
  border-right: 7px solid transparent;
  border-top: 9px solid #888;
}
.modal-foot {
  padding: 32px;
  display: flex;
  justify-content: flex-end;
  gap: 16px;
  border-top: 2px solid #dee2e6;
}
.btn {
  height: 76px;
  padding: 2px 24px 0;
  border: 2px solid transparent;
  border-radius: 8px;
  color: #fff;
  font: 32px/48px "DejaVu Sans", sans-serif;
}
.btn-save { background: #2f7df6; }
.btn-cancel { background: #6c757d; }
```
